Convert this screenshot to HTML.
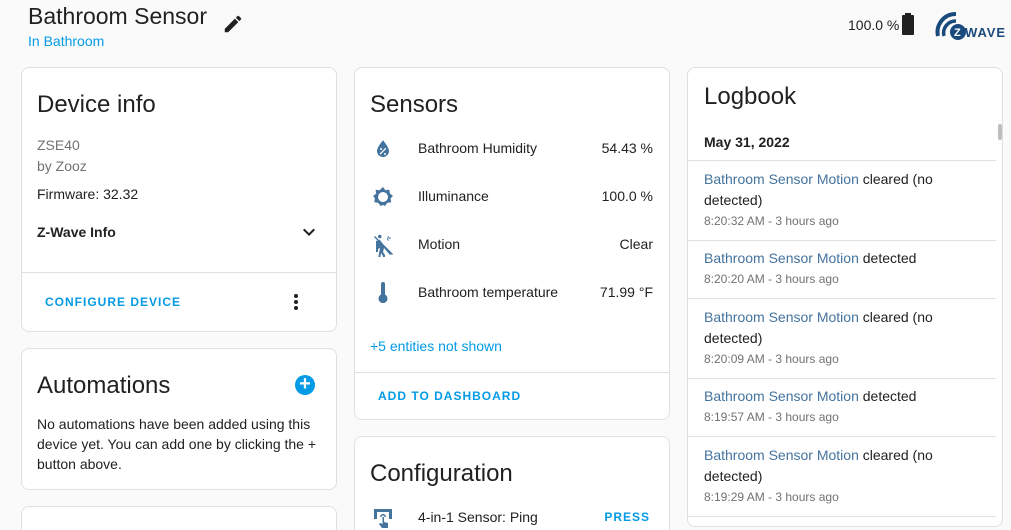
<!DOCTYPE html>
<html><head><meta charset="utf-8"><style>
*{box-sizing:border-box;margin:0;padding:0}
html,body{width:1011px;height:530px;overflow:hidden}
body{background:#fafafa;font-family:"Liberation Sans",sans-serif;color:#212121;position:relative}
.a{position:absolute}
.card{position:absolute;background:#fff;border:1px solid #e0e0e0;border-radius:8px;overflow:hidden}
.h{font-size:24px;color:#212121}
.t{font-size:14px}
.btn{font-size:12px;color:#039be5;letter-spacing:1px;font-weight:bold}
.lnk{color:#44739e}
.sec{font-size:12px;color:#727272}
.line{position:absolute;left:0;right:0;height:1px;background:#e0e0e0}
svg.i{position:absolute;width:24px;height:24px;fill:#44739e}
</style></head><body>
<div class="a" style="left:28px;top:3px;font-size:23px;color:#212121">Bathroom Sensor</div>
<div class="a" style="left:28px;top:33px;font-size:14px;color:#039be5">In Bathroom</div>
<svg class="a" style="left:222px;top:13px;width:22px;height:22px" viewBox="0 0 24 24"><path fill="#212121" d="M20.71 7.04c.39-.39.39-1.04 0-1.41l-2.34-2.34c-.37-.39-1.02-.39-1.41 0l-1.84 1.83 3.75 3.75M3 17.25V21h3.75L17.81 9.93l-3.75-3.75L3 17.25z"/></svg>
<div class="a" style="left:848px;top:17px;font-size:14px">100.0 %</div>
<div class="a" style="left:902px;top:15px;width:12px;height:20px;background:#212121;border-radius:1px"></div>
<div class="a" style="left:905px;top:13px;width:6px;height:3px;background:#212121"></div>
<svg class="a" style="left:934px;top:8px;width:72px;height:34px" viewBox="0 0 72 34">
<path d="M4 28 A18 18 0 0 1 22 6" stroke="#1a4a7c" stroke-width="4" fill="none"/>
<path d="M10 28 A12 12 0 0 1 22 13" stroke="#1a4a7c" stroke-width="3.5" fill="none"/>
<circle cx="24" cy="24" r="8" fill="#1a4a7c"/>
<text x="20" y="28" font-size="11" font-weight="bold" fill="#fff" font-family="Liberation Sans">Z</text>
<text x="31" y="29" font-size="13" font-weight="bold" fill="#1a4a7c" font-family="Liberation Sans" textLength="40">WAVE</text>
</svg>

<div class="card" style="left:21px;top:67px;width:316px;height:265px">
<div class="a h" style="left:15px;top:23px">Device info</div>
<div class="a t" style="left:15px;top:69px;color:#727272">ZSE40</div>
<div class="a t" style="left:15px;top:90px;color:#727272">by Zooz</div>
<div class="a t" style="left:15px;top:118px">Firmware: 32.32</div>
<div class="a t" style="left:15px;top:156px;font-weight:bold">Z-Wave Info</div>
<svg class="a" style="left:275px;top:152px;width:24px;height:24px" viewBox="0 0 24 24"><path fill="#212121" d="M7.41 8.58L12 13.17l4.59-4.59L18 10l-6 6-6-6z"/></svg>
<div class="line" style="top:204px"></div>
<div class="a btn" style="left:23px;top:227px">CONFIGURE DEVICE</div>
<div class="a" style="left:272px;top:226px;width:4px;height:4px;border-radius:2px;background:#212121;box-shadow:0 6px 0 #212121,0 12px 0 #212121"></div>
</div>
<div class="card" style="left:21px;top:348px;width:316px;height:142px">
<div class="a h" style="left:15px;top:23px">Automations</div>
<div class="a" style="left:273px;top:26px;width:20px;height:20px;border-radius:10px;background:#039be5;color:#fff;font-size:20px;line-height:19px;text-align:center;font-weight:bold">+</div>
<div class="a t" style="left:15px;top:65px;width:290px;line-height:20px">No automations have been added using this device yet. You can add one by clicking the + button above.</div>
</div>
<div class="card" style="left:21px;top:506px;width:316px;height:40px"></div>

<div class="card" style="left:354px;top:67px;width:316px;height:353px">
<div class="a h" style="left:15px;top:23px">Sensors</div>
<svg class="i" style="left:16px;top:69px" viewBox="0 0 24 24"><path d="M12 3.25S6 10 6 14a6 6 0 0 0 12 0c0-4-6-10.75-6-10.75zM9.5 17.5l-.9-.9 5.9-5.9.9.9zM10 13a1 1 0 1 1 0-2 1 1 0 0 1 0 2zm4 5a1 1 0 1 1 0-2 1 1 0 0 1 0 2z"/></svg>
<div class="a t" style="left:63px;top:72px">Bathroom Humidity</div><div class="a t" style="right:16px;top:72px">54.43 %</div>
<svg class="i" style="left:16px;top:117px" viewBox="0 0 24 24"><path d="M12 2l2.4 3.2 3.9-.6.6 3.9L22 11l-2.4 2.4.6 3.9-3.9.6L14 21l-2-1-2.4 1-2.4-3.2-3.9-.6.6-3.9L2 11l3.2-2.4-.6-3.9 3.9.6zM12 7a5 5 0 1 0 0 10 5 5 0 0 0 0-10z"/></svg>
<div class="a t" style="left:63px;top:120px">Illuminance</div><div class="a t" style="right:16px;top:120px">100.0 %</div>
<svg class="i" style="left:16px;top:165px" viewBox="0 0 24 24"><path d="M7 3.5a1.8 1.8 0 1 1 0 .1zM5 8l4-1 3 4 8 10-1 1-6-7-1 4 2 3v4h-2v-3l-2-3-1 6H7l2-11-2 1v3H5zM3 4l1-1 18 18-1 1zM17 3l1 1-1 2 1 1-1 1-1-2zm2 1l1 1-1 1-1-1z"/></svg>
<div class="a t" style="left:63px;top:168px">Motion</div><div class="a t" style="right:16px;top:168px">Clear</div>
<svg class="i" style="left:16px;top:213px" viewBox="0 0 24 24"><path d="M10 3a2 2 0 0 1 4 0v10.5a4.5 4.5 0 1 1-4 0z"/></svg>
<div class="a t" style="left:63px;top:216px">Bathroom temperature</div><div class="a t" style="right:16px;top:216px">71.99 °F</div>
<div class="a t" style="left:15px;top:270px;color:#039be5">+5 entities not shown</div>
<div class="line" style="top:304px"></div>
<div class="a btn" style="left:23px;top:321px">ADD TO DASHBOARD</div>
</div>
<div class="card" style="left:354px;top:436px;width:316px;height:110px">
<div class="a h" style="left:15px;top:23px">Configuration</div>
<svg class="i" style="left:16px;top:69px" viewBox="0 0 24 24"><path d="M3 3h18v10h-3V6H6v7H3zM12 8a3 3 0 0 1 3 3h-1.5a1.5 1.5 0 0 0-3 0H9a3 3 0 0 1 3-3zm-.5 3h1.5v5l4 1v5h-6l-3-4 1-1 2.5 1z"/></svg>
<div class="a t" style="left:63px;top:72px">4-in-1 Sensor: Ping</div>
<div class="a btn" style="right:19px;top:73px">PRESS</div>
</div>

<div class="card" style="left:687px;top:67px;width:316px;height:460px">
<div class="a h" style="left:16px;top:15px">Logbook</div>
<div class="a" style="left:310px;top:56px;width:4px;height:16px;background:#bdbdbd;border-radius:2px"></div>
<div class="a t" style="left:16px;top:66px;font-weight:bold">May 31, 2022</div>
<div class="line" style="top:92px;right:6px"></div>
<div class="a t" style="left:16px;top:101px;width:280px;line-height:21px"><span class="lnk">Bathroom Sensor Motion</span> cleared (no detected)</div>
<div class="a sec" style="left:16px;top:146px">8:20:32 AM - 3 hours ago</div>
<div class="line" style="top:172px;right:6px"></div>
<div class="a t" style="left:16px;top:182px"><span class="lnk">Bathroom Sensor Motion</span> detected</div>
<div class="a sec" style="left:16px;top:204px">8:20:20 AM - 3 hours ago</div>
<div class="line" style="top:230px;right:6px"></div>
<div class="a t" style="left:16px;top:239px;width:280px;line-height:21px"><span class="lnk">Bathroom Sensor Motion</span> cleared (no detected)</div>
<div class="a sec" style="left:16px;top:284px">8:20:09 AM - 3 hours ago</div>
<div class="line" style="top:310px;right:6px"></div>
<div class="a t" style="left:16px;top:320px"><span class="lnk">Bathroom Sensor Motion</span> detected</div>
<div class="a sec" style="left:16px;top:342px">8:19:57 AM - 3 hours ago</div>
<div class="line" style="top:368px;right:6px"></div>
<div class="a t" style="left:16px;top:377px;width:280px;line-height:21px"><span class="lnk">Bathroom Sensor Motion</span> cleared (no detected)</div>
<div class="a sec" style="left:16px;top:422px">8:19:29 AM - 3 hours ago</div>
<div class="line" style="top:448px;right:6px"></div>
</div>
</body></html>
